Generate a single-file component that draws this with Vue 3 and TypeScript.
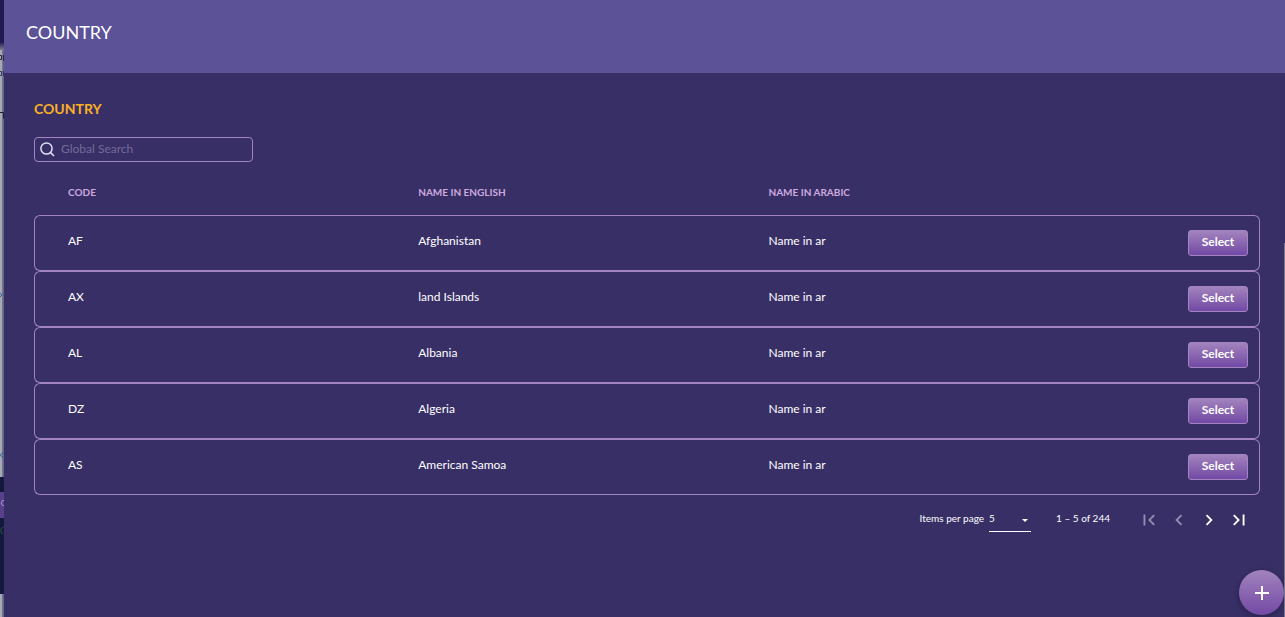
<script setup lang="ts">
import { ref } from 'vue'

interface Country {
  code: string
  english: string
  arabic: string
}

const countries: Country[] = [
  { code: 'AF', english: 'Afghanistan', arabic: 'Name in ar' },
  { code: 'AX', english: 'land Islands', arabic: 'Name in ar' },
  { code: 'AL', english: 'Albania', arabic: 'Name in ar' },
  { code: 'DZ', english: 'Algeria', arabic: 'Name in ar' },
  { code: 'AS', english: 'American Samoa', arabic: 'Name in ar' },
]

const search = ref('')
const pageSize = ref('5')
</script>

<template>
  <div class="screen">
    <div class="backdrop" aria-hidden="true">
      <div class="block top"></div>
      <div class="block page">
        <svg class="marks" width="4" height="427" viewBox="0 0 4 427" fill="none">
          <path d="M0 5.500h1.500v4H0M3.500 5v6" stroke="#2b2838" />
          <path d="M0 21.500h1.500v4H0M3.500 21v5" stroke="#2f3a60" />
          <path d="M0 62.500h3.500v6" stroke="#20202c" />
          <path d="M0 243l2 2-2 2" stroke="#2f6397" />
          <path d="M3 402l-2.500 3L3 408" stroke="#2f6397" />
        </svg>
      </div>
      <div class="block navy"></div>
      <div class="block violet">
        <svg class="marks" width="4" height="26" viewBox="0 0 4 26" fill="none">
          <path d="M4 8.500H2.500L1.500 10v2l1 1.500H4" stroke="#a494c0" />
        </svg>
      </div>
      <div class="block navy tall">
        <svg class="marks" width="4" height="76" viewBox="0 0 4 76" fill="none">
          <path d="M3.500 9L1 10.500v4L3.500 16" stroke="#1c5a35" />
        </svg>
      </div>
      <div class="block rest"></div>
    </div>

    <main class="panel">
      <header class="bar">
        <h1>COUNTRY</h1>
      </header>

      <section class="content">
        <h2>COUNTRY</h2>
        <label class="search">
          <svg width="15" height="15" viewBox="0 0 15 15" fill="none" stroke="#dfe0f5" stroke-width="1.500">
            <circle cx="6.500" cy="6.500" r="5.600" />
            <path d="M10.600 10.600L14 14" />
          </svg>
          <input v-model="search" type="text" placeholder="Global Search" aria-label="Global Search" />
        </label>

        <table>
          <thead>
            <tr>
              <th scope="col">CODE</th>
              <th scope="col">NAME IN ENGLISH</th>
              <th scope="col">NAME IN ARABIC</th>
              <th class="action-col"></th>
            </tr>
          </thead>
          <tbody>
            <tr v-for="c in countries" :key="c.code">
              <td>{{ c.code }}</td>
              <td>{{ c.english }}</td>
              <td>{{ c.arabic }}</td>
              <td class="action"><button class="select" type="button">Select</button></td>
            </tr>
          </tbody>
        </table>

        <nav class="pager" aria-label="Pagination">
          <label for="page-size">Items per page</label>
          <div class="size">
            <select id="page-size" v-model="pageSize">
              <option>5</option>
              <option>10</option>
              <option>20</option>
            </select>
            <svg class="caret" width="6" height="3" viewBox="0 0 6 3"><path d="M0 0h6L3 3z" fill="#fff" /></svg>
          </div>
          <span class="range">1 – 5 of 244</span>
          <div class="arrows">
            <button type="button" disabled aria-label="First page">
              <svg viewBox="0 0 24 24"><path d="M18.410 16.590L13.820 12l4.590-4.590L17 6l-6 6 6 6zM6 6h2v12H6z" /></svg>
            </button>
            <button type="button" disabled aria-label="Previous page">
              <svg viewBox="0 0 24 24"><path d="M15.410 7.410L14 6l-6 6 6 6 1.410-1.410L10.830 12z" /></svg>
            </button>
            <button type="button" aria-label="Next page">
              <svg viewBox="0 0 24 24"><path d="M10 6L8.590 7.410 13.170 12l-4.580 4.590L10 18l6-6z" /></svg>
            </button>
            <button type="button" aria-label="Last page">
              <svg viewBox="0 0 24 24"><path d="M5.590 7.410L10.180 12l-4.590 4.590L7 18l6-6-6-6zM16 6h2v12h-2z" /></svg>
            </button>
          </div>
        </nav>
      </section>
    </main>

    <button class="add" type="button" aria-label="Add country">
      <svg width="14" height="14" viewBox="0 0 14 14"><path d="M6 0h2v6h6v2H8v6H6V8H0V6h6z" fill="#fff" /></svg>
    </button>
    <div class="scroll-edge" aria-hidden="true"></div>
  </div>
</template>

<style>
body {
  background: #382f67;
}
</style>

<style scoped>
.screen {
  display: flex;
  min-height: 100vh;
  position: relative;
  overflow: hidden;
  background: #382f67;
  color: #fff;
  font-family: Lato, "Noto Sans", sans-serif;
}
button,
input,
select {
  font-family: inherit;
  color: inherit;
}
.backdrop {
  width: 4px;
  flex: none;
  display: flex;
  flex-direction: column;
}
.block {
  flex: none;
}
.top {
  height: 50px;
  background: linear-gradient(#201a50 84%, #7d7c95);
}
.page {
  height: 427px;
  background: linear-gradient(90deg, #a5a8b8 50%, #7b7c92 50%, #5f5e7b);
}
.marks {
  display: block;
}
.navy {
  height: 15px;
  background: #14183c;
}
.violet {
  height: 26px;
  background: #58408b;
}
.tall {
  height: 76px;
}
.rest {
  flex: 1;
  background: linear-gradient(90deg, #a5a8b8 50%, #7b7c92 50%, #5f5e7b);
}
.panel {
  flex: 1;
  min-width: 0;
}
.bar {
  padding: 20px 22px 29px;
  background: #5b5298;
}
h1 {
  margin: 0;
  font-size: 18px;
  line-height: 24px;
  font-weight: 400;
}
.content {
  padding: 26px 25px 26px 30px;
}
h2 {
  margin: 0;
  font-size: 14px;
  line-height: 20px;
  font-weight: 700;
  color: #fbb023;
}
.search {
  display: flex;
  align-items: center;
  gap: 6px;
  width: 219px;
  height: 25px;
  margin-top: 18px;
  padding: 0 5px 1px;
  box-sizing: border-box;
  border: 1px solid #a284c0;
  border-radius: 4px;
}
.search input {
  flex: 1;
  min-width: 0;
  padding: 0;
  border: 0;
  outline: 0;
  background: none;
  font-size: 12px;
  line-height: 20px;
}
.search input::placeholder {
  color: #736c98;
  opacity: 1;
}
table {
  width: 100%;
  table-layout: fixed;
  border-collapse: separate;
  border-spacing: 0;
  font-size: 12px;
  line-height: 16px;
}
th {
  height: 53px;
  padding: 6px 0 0 34px;
  box-sizing: border-box;
  text-align: left;
  vertical-align: middle;
  font-size: 10px;
  font-weight: 700;
  color: #cda9df;
}
.action-col {
  width: 14.3%;
}
td {
  height: 56px;
  box-sizing: border-box;
  padding: 0 0 4px 34px;
  border: solid #a284c0;
  border-width: 1px 0;
}
td:first-child {
  padding-left: 33px;
  border-left-width: 1px;
  border-radius: 6px 0 0 6px;
}
td:last-child {
  border-right-width: 1px;
  border-radius: 0 6px 6px 0;
}
td.action {
  padding: 0 11px 0 0;
  text-align: right;
}
.select {
  width: 60px;
  height: 26px;
  padding: 0 0 4px;
  border: 1px solid #a284c0;
  border-radius: 3px;
  background: linear-gradient(#a283bd, #7349a5);
  font-size: 12px;
  font-weight: 700;
  vertical-align: middle;
}
.pager {
  display: flex;
  align-items: center;
  justify-content: flex-end;
  height: 48px;
  font-size: 10px;
  line-height: 16px;
}
.pager label,
.range {
  padding-bottom: 2px;
}
.size {
  position: relative;
  margin-left: 5px;
  width: 42px;
  border-bottom: 1px solid #fff;
}
.size select {
  display: block;
  width: 100%;
  height: 24px;
  padding: 0 0 2px;
  border: 0;
  outline: 0;
  appearance: none;
  background: none;
  font-size: 10px;
}
.caret {
  position: absolute;
  right: 3px;
  top: 12px;
}
.range {
  margin-left: 25px;
}
.arrows {
  display: flex;
  margin-left: 24px;
  padding-top: 2px;
  padding-right: 6px;
}
.arrows button {
  display: grid;
  place-items: center;
  width: 30px;
  height: 30px;
  padding: 0;
  border: 0;
  background: none;
}
.arrows svg {
  width: 22px;
  height: 22px;
  fill: #fff;
}
.arrows button:disabled svg {
  fill: #9590b2;
}
.add {
  position: absolute;
  right: 1px;
  bottom: 2px;
  display: grid;
  place-items: center;
  width: 45px;
  height: 45px;
  padding: 0;
  border: 0;
  border-radius: 50%;
  background: linear-gradient(#a283bd, #7349a5);
  box-shadow: 0 2px 6px #00000050;
}
.scroll-edge {
  position: absolute;
  right: 0;
  top: 243px;
  bottom: 0;
  width: 1px;
  background: #77738f;
}
</style>
